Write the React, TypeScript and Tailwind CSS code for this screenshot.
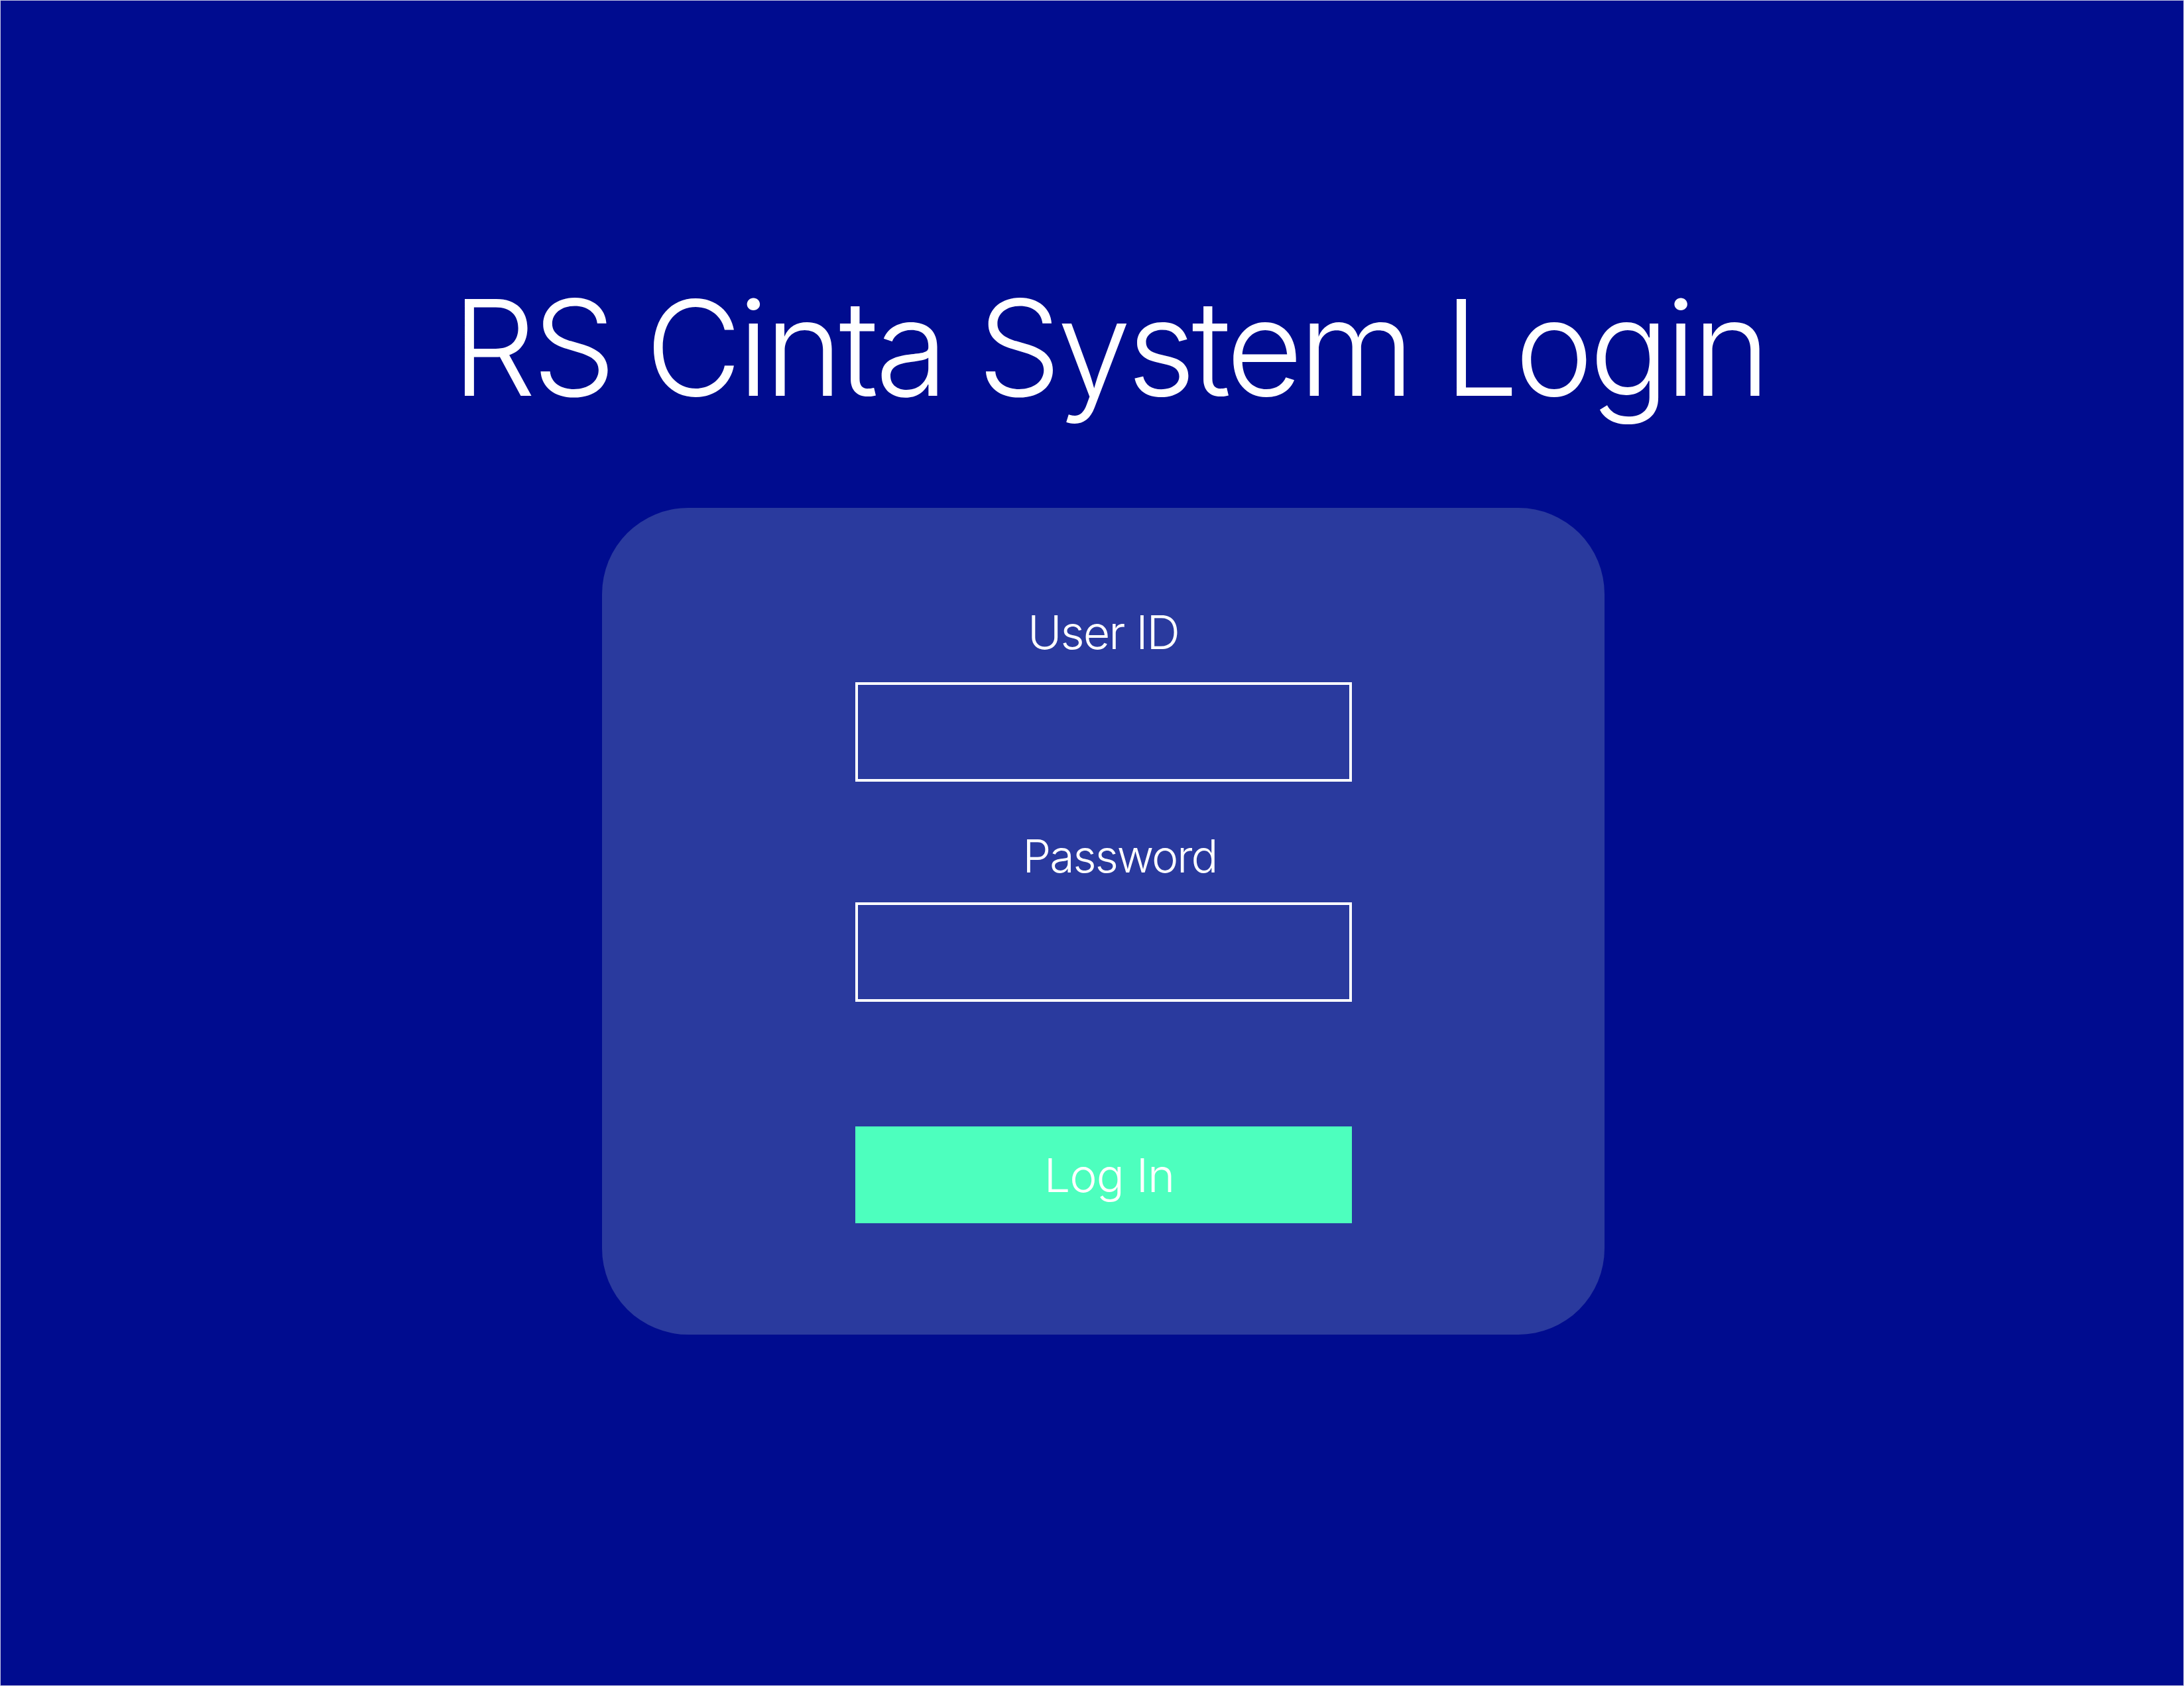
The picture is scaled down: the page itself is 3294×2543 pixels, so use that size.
import React, { useState } from 'react';

const LoginField: React.FC<{ label: string; type: string; labelClass: string; value: string; onChange: (v: string) => void }> = ({
  label,
  type,
  labelClass,
  value,
  onChange,
}) => (
  <div className="flex flex-col items-center">
    <label className={`leading-none font-light tracking-[-2px] text-white ${labelClass}`}>{label}</label>
    <input
      type={type}
      value={value}
      onChange={(e) => onChange(e.target.value)}
      className="w-[749px] h-[150px] border-4 border-white bg-transparent outline-none px-6 text-[56px] text-white"
    />
  </div>
);

const App: React.FC = () => {
  const [userId, setUserId] = useState('');
  const [password, setPassword] = useState('');

  return (
    <div className="min-h-screen bg-[#000c8f] border border-[#c3c6e4] flex flex-col items-center font-['Inter',_'Liberation_Sans',_sans-serif]">
      <h1 className="mt-[423px] ml-[52px] text-[200px] leading-none font-light tracking-[-6px] text-white">
        RS Cinta System Login
      </h1>

      <div className="mt-[142px] ml-[34px] w-[1512px] h-[1247px] rounded-[130px] bg-[#2a3a9e] flex flex-col items-center pt-[153px]">
        <LoginField label="User ID" type="text" labelClass="text-[70px] mb-[40px]" value={userId} onChange={setUserId} />
        <div className="mt-[78px]">
          <LoginField label="Password" type="password" labelClass="pl-[50px] text-[68px] mb-[36px]" value={password} onChange={setPassword} />
        </div>
        <button className="mt-[188px] w-[749px] h-[146px] bg-[#4dffbe] text-white text-[70px] font-light tracking-[-1px] pl-[18px]">
          Log In
        </button>
      </div>
    </div>
  );
};

export default App;
